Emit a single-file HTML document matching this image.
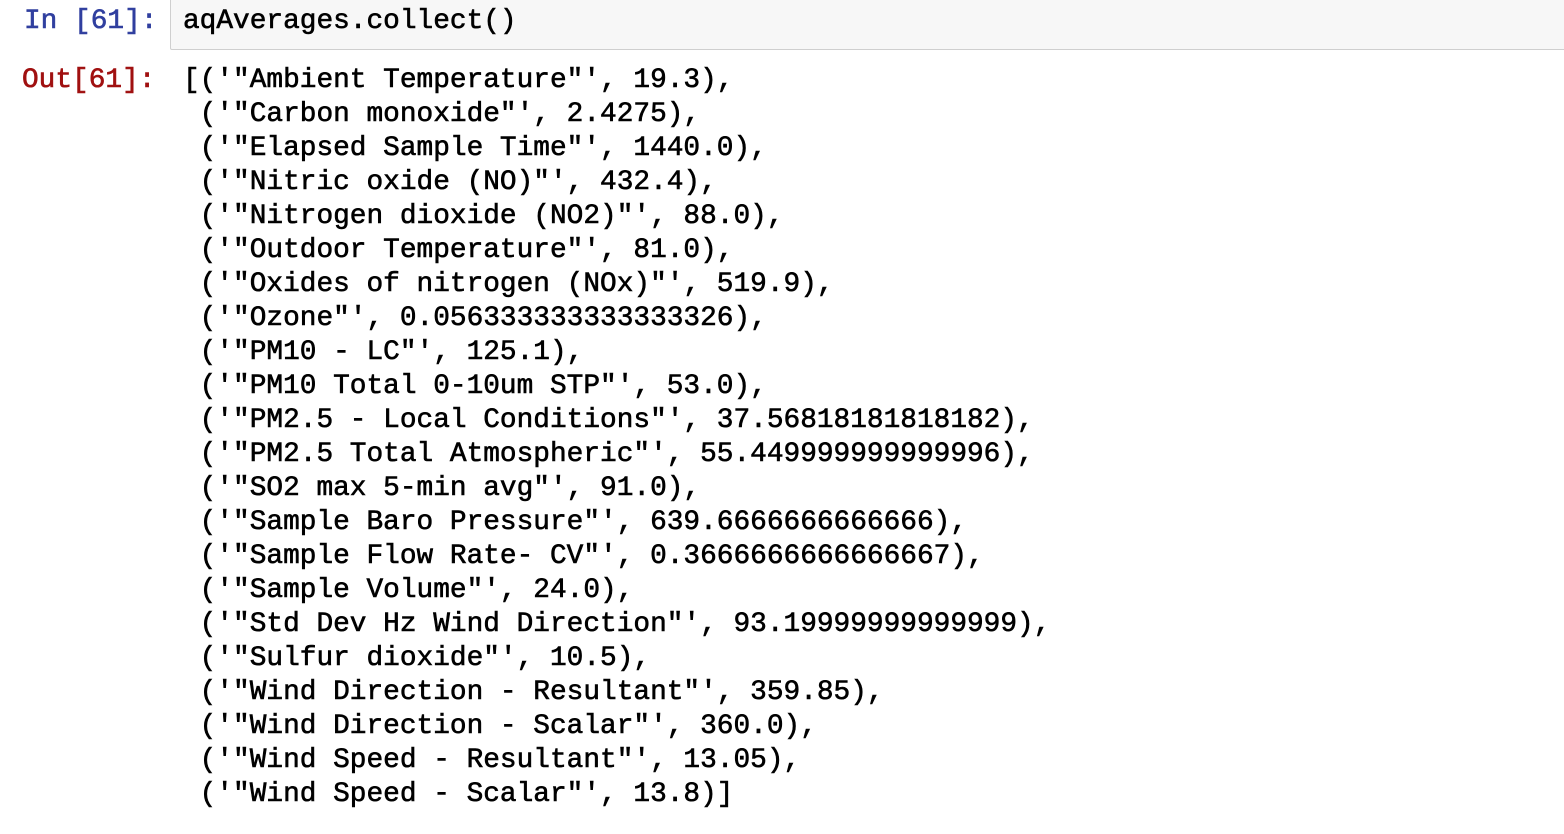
<!DOCTYPE html>
<html><head><meta charset="utf-8"><style>
body{margin:0;width:1564px;height:834px;background:#fff;overflow:hidden;font-family:"Liberation Mono",monospace;font-size:27.8px;position:relative}
.p{position:absolute;white-space:pre;line-height:34px;-webkit-text-stroke:0.6px currentColor}
#box{position:absolute;left:170px;top:-4px;width:1420px;height:52px;background:#f7f7f7;border:1px solid #cfcfcf;border-radius:2px}
</style></head><body>
<div id="box"></div>
<div class="p" style="left:24px;top:5px;color:#303F9F">In [61]:</div>
<div class="p" style="left:183px;top:5px;color:#000">aqAverages.collect()</div>
<div class="p" style="left:22px;top:64px;color:#A01010">Out[61]:</div>
<div class="p" style="left:183px;top:64px;color:#000">[('"Ambient Temperature"', 19.3),
 ('"Carbon monoxide"', 2.4275),
 ('"Elapsed Sample Time"', 1440.0),
 ('"Nitric oxide (NO)"', 432.4),
 ('"Nitrogen dioxide (NO2)"', 88.0),
 ('"Outdoor Temperature"', 81.0),
 ('"Oxides of nitrogen (NOx)"', 519.9),
 ('"Ozone"', 0.056333333333333326),
 ('"PM10 - LC"', 125.1),
 ('"PM10 Total 0-10um STP"', 53.0),
 ('"PM2.5 - Local Conditions"', 37.56818181818182),
 ('"PM2.5 Total Atmospheric"', 55.449999999999996),
 ('"SO2 max 5-min avg"', 91.0),
 ('"Sample Baro Pressure"', 639.6666666666666),
 ('"Sample Flow Rate- CV"', 0.3666666666666667),
 ('"Sample Volume"', 24.0),
 ('"Std Dev Hz Wind Direction"', 93.19999999999999),
 ('"Sulfur dioxide"', 10.5),
 ('"Wind Direction - Resultant"', 359.85),
 ('"Wind Direction - Scalar"', 360.0),
 ('"Wind Speed - Resultant"', 13.05),
 ('"Wind Speed - Scalar"', 13.8)]</div>
</body></html>
